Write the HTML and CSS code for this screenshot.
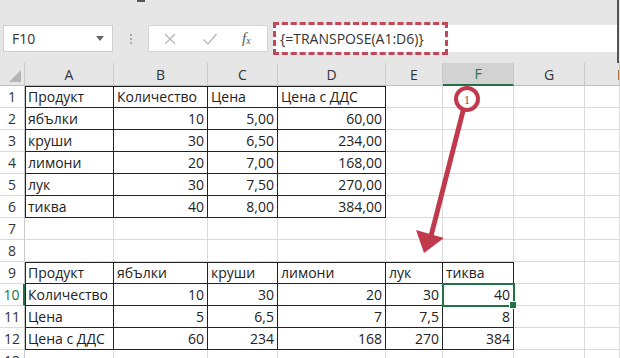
FILE: index.html
```html
<!DOCTYPE html>
<html>
<head>
<meta charset="utf-8">
<link rel="stylesheet" href="styles.css">
</head>
<body>
<div class="toolbar">
  <div class="topmark"></div>
  <div class="namebox"><span>F10</span><span class="tri"></span></div>
  <div class="sep"><i></i><i></i><i></i></div>
  <div class="fxbox">
    <svg class="ico" width="14" height="14" viewBox="0 0 14 14"><path d="M2 2 L12 12 M12 2 L2 12" stroke="#b9b9b9" stroke-width="1.4" fill="none"/></svg>
    <svg class="ico" width="16" height="14" viewBox="0 0 16 14"><path d="M1.5 7.5 L6 12 L14.5 2" stroke="#b9b9b9" stroke-width="1.4" fill="none"/></svg>
    <span class="fx">f<sub>x</sub></span>
  </div>
  <div class="formula"><span class="dashed">{=TRANSPOSE(A1:D6)}</span></div>
  <div class="edge"></div>
</div>
<table class="sheet">
  <colgroup>
    <col class="c0"><col class="ca"><col class="cb"><col class="cc"><col class="cd"><col class="ce"><col class="cf"><col class="cg"><col class="ch">
  </colgroup>
  <tr class="hdr">
    <th class="corner"><span class="cornertri"></span></th><th>A</th><th>B</th><th>C</th><th>D</th><th>E</th><th class="sel">F</th><th>G</th><th class="hcut">H</th>
  </tr>
  <tr>
    <th class="rn">1</th><td class="k kt kl">Продукт</td><td class="k kt">Количество</td><td class="k kt">Цена</td><td class="k kt">Цена с ДДС</td><td></td><td></td><td></td><td></td>
  </tr>
  <tr>
    <th class="rn">2</th><td class="k kl">ябълки</td><td class="k n">10</td><td class="k n">5,00</td><td class="k n">60,00</td><td></td><td></td><td></td><td></td>
  </tr>
  <tr>
    <th class="rn">3</th><td class="k kl">круши</td><td class="k n">30</td><td class="k n">6,50</td><td class="k n">234,00</td><td></td><td></td><td></td><td></td>
  </tr>
  <tr>
    <th class="rn">4</th><td class="k kl">лимони</td><td class="k n">20</td><td class="k n">7,00</td><td class="k n">168,00</td><td></td><td></td><td></td><td></td>
  </tr>
  <tr>
    <th class="rn">5</th><td class="k kl">лук</td><td class="k n">30</td><td class="k n">7,50</td><td class="k n">270,00</td><td></td><td></td><td></td><td></td>
  </tr>
  <tr>
    <th class="rn">6</th><td class="k kl">тиква</td><td class="k n">40</td><td class="k n">8,00</td><td class="k n">384,00</td><td></td><td></td><td></td><td></td>
  </tr>
  <tr>
    <th class="rn">7</th><td></td><td></td><td></td><td></td><td></td><td></td><td></td><td></td>
  </tr>
  <tr>
    <th class="rn">8</th><td></td><td></td><td></td><td></td><td></td><td></td><td></td><td></td>
  </tr>
  <tr>
    <th class="rn">9</th><td class="k kt kl">Продукт</td><td class="k kt">ябълки</td><td class="k kt">круши</td><td class="k kt">лимони</td><td class="k kt">лук</td><td class="k kt">тиква</td><td></td><td></td>
  </tr>
  <tr>
    <th class="rn rsel">10</th><td class="k kl">Количество</td><td class="k n">10</td><td class="k n">30</td><td class="k n">20</td><td class="k n">30</td><td class="k n active">40</td><td></td><td></td>
  </tr>
  <tr>
    <th class="rn">11</th><td class="k kl">Цена</td><td class="k n">5</td><td class="k n">6,5</td><td class="k n">7</td><td class="k n">7,5</td><td class="k n">8</td><td></td><td></td>
  </tr>
  <tr>
    <th class="rn">12</th><td class="k kl">Цена с ДДС</td><td class="k n">60</td><td class="k n">234</td><td class="k n">168</td><td class="k n">270</td><td class="k n">384</td><td></td><td></td>
  </tr>
  <tr>
    <th class="rn">13</th><td></td><td></td><td></td><td></td><td></td><td></td><td></td><td></td>
  </tr>
</table>
<svg class="annot" width="620" height="358" viewBox="0 0 620 358">
  <line x1="463" y1="111" x2="431" y2="236" stroke="#c1394d" stroke-width="5" stroke-linecap="round"/>
  <polygon points="424,253 416,230 444,238" fill="#c1394d"/>
  <circle cx="467" cy="99" r="11" fill="#fff" stroke="#c1394d" stroke-width="4"/>
  <text x="467" y="104" text-anchor="middle" class="num">1</text>
</svg>
</body>
</html>
```
FILE: styles.css
```css
* { box-sizing: border-box; }
html, body { margin: 0; padding: 0; }
body {
  width: 620px;
  height: 358px;
  overflow: hidden;
  position: relative;
  background: #fff;
  font-family: "Open Sans", "Noto Sans", sans-serif;
  color: #222;
}
.toolbar {
  height: 63px;
  background: #e6e6e6;
  display: flex;
  align-items: flex-start;
  padding-top: 25px;
  position: relative;
}
.topmark {
  position: absolute;
  left: 137px;
  top: 0;
  width: 8px;
  height: 2px;
  background: #555;
}
.namebox {
  margin-left: 3px;
  width: 110px;
  height: 27px;
  background: #fff;
  border: 1px solid #cfcfcf;
  display: flex;
  align-items: center;
  justify-content: space-between;
  padding: 0 8px 0 8px;
  font-size: 14px;
  color: #333;
}
.tri {
  width: 0; height: 0;
  border-left: 4px solid transparent;
  border-right: 4px solid transparent;
  border-top: 5px solid #666;
}
.sep {
  width: 35px;
  height: 27px;
  display: flex;
  flex-direction: column;
  align-items: center;
  justify-content: center;
  gap: 2px;
}
.sep i {
  display: block;
  width: 2px;
  height: 2px;
  background: #a8a8a8;
}
.fxbox {
  width: 120px;
  height: 27px;
  background: #fff;
  border: 1px solid #d6d6d6;
  display: flex;
  align-items: center;
  padding-left: 14px;
  gap: 25px;
}
.fx {
  font-family: "Liberation Serif", serif;
  font-style: italic;
  font-size: 15px;
  color: #555;
  margin-left: -1px;
}
.fx sub { font-size: 10px; vertical-align: -1px; }
.formula {
  margin-left: 5px;
  width: 344px;
  height: 27px;
  background: #fff;
  display: flex;
  align-items: center;
}
.dashed {
  width: 175px;
  height: 33px;
  flex: none;
  border: 3px dashed #c0485a;
  display: flex;
  align-items: center;
  padding-left: 4px;
  font-size: 14px;
  color: #333;
}
.edge {
  position: absolute;
  right: 1px;
  top: 0;
  width: 2px;
  height: 63px;
  background: #555;
}
.sheet {
  border-collapse: separate;
  border-spacing: 0;
  table-layout: fixed;
  width: 620px;
  font-size: 14px;
}
.c0 { width: 25px; }
.ca { width: 89px; }
.cb { width: 94px; }
.cc { width: 70px; }
.cd { width: 108px; }
.ce { width: 57px; }
.cf { width: 71px; }
.cg { width: 71px; }
.ch { width: 35px; }
.sheet tr { height: 22px; }
.sheet tr.hdr { height: 23px; }
.sheet td {
  border-right: 1px solid #dadada;
  border-bottom: 1px solid #dadada;
  padding: 0 3px;
  white-space: nowrap;
  overflow: visible;
  color: #222;
}
.sheet th {
  font-weight: normal;
  padding: 0;
  white-space: nowrap;
}
.hdr th {
  background: #e6e6e6;
  border-right: 1px solid #c9c9c9;
  border-bottom: 1px solid #bdbdbd;
  font-size: 14px;
  color: #333;
  text-align: center;
}
.hdr th.sel {
  background: #d2d2d2;
  color: #217346;
  border-bottom: 2px solid #217346;
}
.hdr th.hcut { text-align: left; padding-left: 32px; overflow: hidden; }
.corner { position: relative; }
.cornertri {
  position: absolute;
  right: 3px;
  bottom: 3px;
  width: 0; height: 0;
  border-left: 12px solid transparent;
  border-bottom: 12px solid #b5b5b5;
}
.rn {
  background: #fff;
  border-right: 1px solid #c9c9c9;
  border-bottom: 1px solid #dadada;
  text-align: center;
  font-size: 14px;
  color: #333;
}
.rn.rsel {
  color: #217346;
  border-right: 2px solid #217346;
}
.sheet td.k {
  border-right-color: #222;
  border-bottom-color: #222;
}
.sheet td.kt { box-shadow: inset 0 1px 0 #222; }
.sheet td.kl { box-shadow: inset 1px 0 0 #222; }
.sheet td.kt.kl { box-shadow: inset 1px 1px 0 #222; }
.sheet td.n { text-align: right; }
.sheet td.active {
  position: relative;
  outline: 2px solid #217346;
  outline-offset: -1px;
}
.sheet td.active::after {
  content: "";
  position: absolute;
  right: -4px;
  bottom: -4px;
  width: 6px;
  height: 6px;
  background: #217346;
  border: 1px solid #fff;
}
.annot {
  position: absolute;
  left: 0;
  top: 0;
  pointer-events: none;
}
.annot .num {
  font-family: "Liberation Serif", serif;
  font-size: 13px;
  fill: #b04055;
}
```
